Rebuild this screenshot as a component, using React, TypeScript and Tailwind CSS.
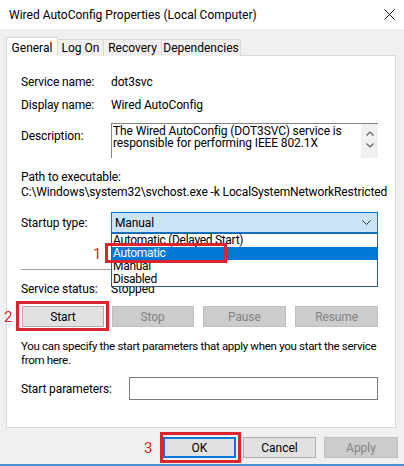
import React from "react";

const btn = "h-[21px] flex items-center justify-center border text-[12px]";
const enabledBtn = "bg-[#e1e1e1] border-[#adadad] text-black";
const disabledBtn = "bg-[#cccccc] border-[#bfbfbf] text-[#838383]";

export default function App() {
  return (
    <div
      className="relative w-[404px] h-[466px] bg-[#f0f0f0] flex flex-col text-[12px] text-black overflow-hidden"
      style={{ fontFamily: 'Roboto, "Liberation Sans", Arial, sans-serif' }}
    >
      {/* Title bar */}
      <div className="h-[29px] bg-white flex items-center justify-between pl-[9px] pr-[8px] shrink-0">
        <span className="text-[12px] leading-none">Wired AutoConfig Properties (Local Computer)</span>
        <svg width="11" height="11" viewBox="0 0 11 11" className="mr-[1px]">
          <path d="M0.5 0.5 L10.5 10.5 M10.5 0.5 L0.5 10.5" stroke="#111" strokeWidth="1" />
        </svg>
      </div>

      {/* Tabs */}
      <div className="flex items-end pl-[6px] mt-[8px] h-[19px] relative z-10">
        <div className="w-[52px] h-[19px] bg-white border border-b-0 border-[#d9d9d9] flex items-start justify-center pt-[1px]">
          General
        </div>
        <div className="w-[46px] h-[17px] bg-[#f0f0f0] border border-l-0 border-b-0 border-[#d9d9d9] flex items-center justify-center">
          Log On
        </div>
        <div className="w-[58px] h-[17px] bg-[#f0f0f0] border border-l-0 border-b-0 border-[#d9d9d9] flex items-center justify-center">
          Recovery
        </div>
        <div className="w-[79px] h-[17px] bg-[#f0f0f0] border border-l-0 border-b-0 border-[#d9d9d9] flex items-center justify-center">
          Dependencies
        </div>
      </div>

      {/* Panel */}
      <div className="mx-[6px] w-[390px] h-[373px] bg-white border border-[#d9d9d9] mt-[-1px] flex flex-col pl-[14px] pr-[17px] tracking-[-0.12px]">
        <div className="flex items-center h-[16px] mt-[18px]">
          <span className="w-[90px]">Service name:</span>
          <span>dot3svc</span>
        </div>
        <div className="flex items-center h-[16px] mt-[7px]">
          <span className="w-[90px]">Display name:</span>
          <span>Wired AutoConfig</span>
        </div>
        <div className="flex mt-[10px] h-[35px]">
          <span className="w-[90px] pt-[4px]">Description:</span>
          <div className="flex-1 flex border-t border-l border-[#828282]">
            <div className="flex-1 pl-[1px] pt-[1px] leading-[12px] text-[12px]">
              The Wired AutoConfig (DOT3SVC) service is responsible for performing IEEE 802.1X
            </div>
            <div className="w-[17px] bg-[#f0f0f0] flex flex-col items-center pt-[7px] gap-[7px]">
              <svg width="8" height="5" viewBox="0 0 8 5">
                <path d="M0.5 4.5 L4 1 L7.5 4.5" fill="none" stroke="#606060" strokeWidth="1.2" />
              </svg>
              <svg width="8" height="5" viewBox="0 0 8 5">
                <path d="M0.5 0.5 L4 4 L7.5 0.5" fill="none" stroke="#606060" strokeWidth="1.2" />
              </svg>
            </div>
          </div>
        </div>
        <div className="mt-[12px] leading-[15px] whitespace-nowrap">
          <div>Path to executable:</div>
          <div>C:\Windows\system32\svchost.exe -k LocalSystemNetworkRestricted</div>
        </div>
        <div className="flex items-center mt-[12px]">
          <span className="w-[90px]">Startup type:</span>
          <div className="relative flex-1">
            <div className="h-[21px] bg-[#cce4f7] border border-[#0078d7] flex items-center justify-between pl-[3px] pr-[6px]">
              <span>Manual</span>
              <svg width="9" height="5" viewBox="0 0 9 5">
                <path d="M0.5 0.5 L4.5 4.5 L8.5 0.5" fill="none" stroke="#333" strokeWidth="1" />
              </svg>
            </div>
            <div className="absolute left-0 right-0 top-[21px] bg-white border border-[#2d5f8a] z-20 text-[12px] tracking-[-0.3px]">
              <div className="h-[13px] leading-[13px] pl-[1px]">Automatic (Delayed Start)</div>
              <div className="h-[13px] leading-[13px] pl-[1px] bg-[#0078d7] text-white">Automatic</div>
              <div className="h-[13px] leading-[13px] pl-[1px]">Manual</div>
              <div className="h-[13px] leading-[13px] pl-[1px]">Disabled</div>
            </div>
          </div>
        </div>
        <div className="h-px bg-[#a0a0a0] mt-[36px]" />
        <div className="flex items-center h-[16px] mt-[11px]">
          <span className="w-[90px]">Service status:</span>
          <span>Stopped</span>
        </div>
        <div className="flex mt-[9px] pl-[1px]">
          <div className={`${btn} ${enabledBtn} w-[82px]`}>Start</div>
          <div className={`${btn} ${disabledBtn} w-[82px] ml-[8px]`}>Stop</div>
          <div className={`${btn} ${disabledBtn} w-[84px] ml-[9px]`}>Pause</div>
          <div className={`${btn} ${disabledBtn} w-[83px] ml-[9px]`}>Resume</div>
        </div>
        <p className="mt-[12px] text-[11.5px] leading-[14px] whitespace-nowrap tracking-[-0.3px]">
          You can specify the start parameters that apply when you start the service
          <br />
          from here.
        </p>
        <div className="flex items-center mt-[10px]">
          <span className="w-[108px]">Start parameters:</span>
          <div className="flex-1 h-[23px] border border-[#7a7a7a] bg-white" />
        </div>
      </div>

      {/* Bottom buttons */}
      <div className="flex mt-[9px] pl-[163px]">
        <div className={`${btn} w-[73px] bg-[#e1e1e1] border-2 border-[#0078d7]`}>OK</div>
        <div className={`${btn} ${enabledBtn} w-[73px] ml-[7px]`}>Cancel</div>
        <div className={`${btn} ${disabledBtn} w-[74px] ml-[8px]`}>Apply</div>
      </div>

      <div className="absolute left-0 right-0 bottom-0 h-[2px] bg-[#4a90d0]" />

      {/* Annotations */}
      <div className="absolute left-[105px] top-[243px] w-[122px] h-[20px] border-[3px] border-[#d9252e] z-30" />
      <div className="absolute left-[93px] top-[245px] text-[#d9252e] text-[15px] leading-[18px] z-30">1</div>
      <div className="absolute left-[16px] top-[301px] w-[93px] h-[30px] border-[3px] border-[#d9252e] z-30" />
      <div className="absolute left-[4px] top-[308px] text-[#d9252e] text-[15px] leading-[18px] z-30">2</div>
      <div className="absolute left-[160px] top-[432px] w-[81px] h-[31px] border-[3px] border-[#d9252e] z-30" />
      <div className="absolute left-[144px] top-[439px] text-[#d9252e] text-[15px] leading-[18px] z-30">3</div>
    </div>
  );
}
